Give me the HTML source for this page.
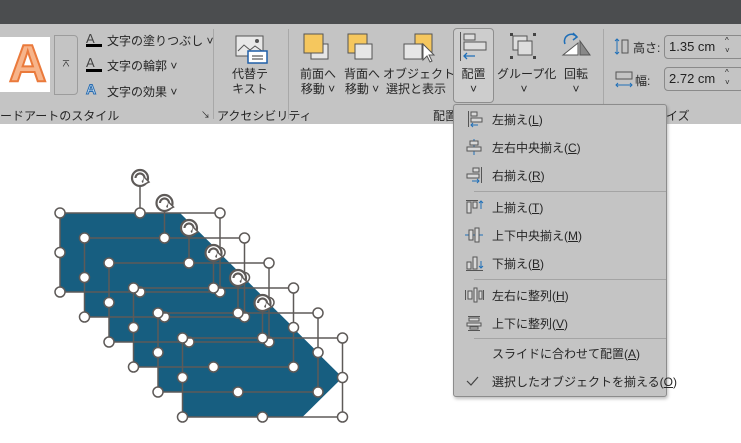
<!DOCTYPE html>
<html><head><meta charset="utf-8"><style>
*{margin:0;padding:0;box-sizing:border-box}
body{width:741px;height:443px;overflow:hidden;background:#fff;font-family:"Liberation Sans","Noto Sans CJK JP",sans-serif;font-size:12px;color:#262626;position:relative}
.a{position:absolute;white-space:nowrap}
.c{text-align:center;line-height:15px}
#top{left:0;top:0;width:741px;height:24px;background:#4b4d4f}
#rib{left:0;top:24px;width:741px;height:100px;background:#c4c4c4}
.sep{position:absolute;width:1px;background:#a8a8a8}
#menu{left:453px;top:104px;width:214px;height:293px;background:#c4c4c4;border:1px solid #8c8c8c;border-radius:3px;box-shadow:1px 2px 3px rgba(0,0,0,.25)}
.mi{position:absolute;left:38px;font-size:12px}
.ms{position:absolute;left:20px;width:192px;height:1px;background:#a4a4a4}
u{text-decoration:underline}
</style></head><body>
<div class="a" id="top"></div>
<div class="a" id="rib"></div>
<div class="a" style="left:0;top:37px;width:50px;height:55px;background:#fff"></div>
<div class="a" style="left:9px;top:34px;font-size:52px;font-weight:bold;color:#f7b48a;-webkit-text-stroke:2px #ea7a3c;line-height:60px">A</div>
<div class="a" style="left:54px;top:35px;width:24px;height:60px;border:1px solid #9c9c9c;border-radius:0 4px 4px 0"></div>
<div class="a" style="left:61px;top:55px;font-size:10px">⌅</div>
<div class="a" style="left:86px;top:31px;font-size:13px;text-decoration:underline;color:#444">A</div>
<div class="a" style="left:86px;top:44px;width:16px;height:3px;background:#000"></div>
<div class="a" style="left:86px;top:55px;font-size:13px;color:#444">A</div>
<div class="a" style="left:86px;top:69px;width:16px;height:3px;background:#000"></div>
<div class="a" style="left:86px;top:81px;font-size:14px;font-weight:bold;color:#cfe3f5;-webkit-text-stroke:1px #2a6db0">A</div>
<div class="a" style="left:107px;top:32px">文字の塗りつぶし ˅</div>
<div class="a" style="left:107px;top:57px">文字の輪郭 ˅</div>
<div class="a" style="left:107px;top:83px">文字の効果 ˅</div>
<div class="a" style="left:0;top:107px">ードアートのスタイル</div>
<div class="a" style="left:201px;top:108px;font-size:9px">↘</div>
<div class="sep" style="left:213px;top:29px;height:90px"></div>
<svg class="a" style="left:235px;top:35px" width="34" height="30"><rect x="1" y="1" width="27" height="20" fill="#e8e8e8" stroke="#555"/><polyline points="3,16 9,10 15,15 20,11 27,16" fill="none" stroke="#555"/><circle cx="22" cy="6" r="2" fill="#555"/><rect x="13" y="16" width="19" height="12" fill="#fff" stroke="#1f5fa8" stroke-width="1.5"/><line x1="17" y1="21" x2="28" y2="21" stroke="#333"/><line x1="17" y1="24" x2="28" y2="24" stroke="#333"/></svg>
<div class="a c" style="left:228px;top:67px;width:44px">代替テ<br>キスト</div>
<div class="a" style="left:217px;top:107px">アクセシビリティ</div>
<div class="sep" style="left:288px;top:29px;height:90px"></div>
<svg class="a" style="left:303px;top:33px" width="30" height="28"><rect x="8" y="11" width="17" height="15" fill="#e6e6e6" stroke="#555"/><rect x="1" y="1" width="19" height="19" fill="#f5c75e" stroke="#555"/></svg>
<div class="a c" style="left:296px;top:67px;width:44px">前面へ<br>移動 ˅</div>
<svg class="a" style="left:347px;top:33px" width="30" height="28"><rect x="1" y="1" width="19" height="19" fill="#f5c75e" stroke="#555"/><rect x="8" y="11" width="17" height="15" fill="#e6e6e6" stroke="#555"/></svg>
<div class="a c" style="left:340px;top:67px;width:44px">背面へ<br>移動 ˅</div>
<svg class="a" style="left:402px;top:33px" width="34" height="30"><rect x="13" y="1" width="17" height="20" fill="#f5c75e" stroke="#555"/><rect x="2" y="11" width="18" height="15" fill="#e6e6e6" stroke="#555"/><path d="M21 11 L21 27 L25 23 L28 29 L30 28 L27 22 L32 22 Z" fill="#fff" stroke="#555"/></svg>
<div class="a c" style="left:383px;top:67px;width:66px">オブジェクトの<br>選択と表示</div>
<div class="a" style="left:433px;top:107px">配置</div>
<div class="a" style="left:453px;top:28px;width:41px;height:75px;background:#cdcdcd;border:1px solid #8e8e8e;border-radius:4px"></div>
<svg class="a" style="left:459px;top:31px" width="30" height="32"><line x1="1.5" y1="1" x2="1.5" y2="30" stroke="#555"/><rect x="5" y="3" width="11" height="6" fill="#ddd" stroke="#555"/><rect x="5" y="11" width="22" height="8" fill="#ddd" stroke="#555"/><path d="M16 25 H5 M8 22 L5 25 L8 28" fill="none" stroke="#1f6fb8" stroke-width="1.3"/></svg>
<div class="a c" style="left:453px;top:67px;width:41px">配置<br>˅</div>
<svg class="a" style="left:508px;top:31px" width="30" height="30"><rect x="5" y="5" width="14" height="14" fill="#ddd" stroke="#555"/><rect x="10" y="10" width="14" height="14" fill="#ddd" stroke="#555"/><rect x="2" y="2" width="3" height="3" fill="#444"/><rect x="25" y="2" width="3" height="3" fill="#444"/><rect x="2" y="25" width="3" height="3" fill="#444"/><rect x="25" y="25" width="3" height="3" fill="#444"/></svg>
<div class="a c" style="left:497px;top:67px;width:54px">グループ化<br>˅</div>
<svg class="a" style="left:561px;top:31px" width="30" height="26"><path d="M4 13 A7 7 0 0 1 16 6" fill="none" stroke="#1f6fb8" stroke-width="1.5"/><path d="M12 2 L16 6 L12 9" fill="none" stroke="#1f6fb8" stroke-width="1.5"/><path d="M2 24 L17 12 L17 24 Z" fill="#fff" stroke="#555"/><path d="M19 10 L29 24 L19 24 Z" fill="#888" stroke="#555"/></svg>
<div class="a c" style="left:557px;top:67px;width:38px">回転<br>˅</div>
<div class="sep" style="left:603px;top:29px;height:90px"></div>
<svg class="a" style="left:614px;top:38px" width="20" height="18"><path d="M3 1 V16 M1 3 L3 1 L5 3 M1 14 L3 16 L5 14" fill="none" stroke="#1f6fb8"/><rect x="8" y="2" width="6" height="13" fill="none" stroke="#555"/></svg>
<div class="a" style="left:633px;top:39px">高さ:</div>
<div class="a" style="left:664px;top:35px;width:80px;height:24px;border:1px solid #8a8a8a;border-radius:4px;padding:3px 4px;font-size:13px;color:#222">1.35 cm</div>
<div class="a" style="left:725px;top:36px;font-size:8px;line-height:10px">^<br>˅</div>
<svg class="a" style="left:614px;top:70px" width="20" height="20"><rect x="2" y="2" width="16" height="7" fill="none" stroke="#555"/><path d="M2 15 H18 M4 13 L2 15 L4 17 M16 13 L18 15 L16 17" fill="none" stroke="#1f6fb8"/></svg>
<div class="a" style="left:635px;top:72px">幅:</div>
<div class="a" style="left:664px;top:67px;width:80px;height:24px;border:1px solid #8a8a8a;border-radius:4px;padding:3px 4px;font-size:13px;color:#222">2.72 cm</div>
<div class="a" style="left:725px;top:68px;font-size:8px;line-height:10px">^<br>˅</div>
<div class="a" style="left:666px;top:107px">イズ</div>

<svg class="a" style="left:0;top:0" width="741" height="443">
<defs>
<path id="sh" d="M0 0 L120 0 L160 39.5 L120 79 L0 79 Z" fill="#175e80"/>
<g id="bx" stroke="#5e5a58" stroke-width="1.5" fill="#fff">
<line x1="80" y1="0" x2="80" y2="-27"/>
<rect x="0" y="0" width="160" height="79" fill="none"/>
<circle cx="0" cy="0" r="5"/><circle cx="80" cy="0" r="5"/><circle cx="160" cy="0" r="5"/>
<circle cx="0" cy="39.5" r="5"/><circle cx="160" cy="39.5" r="5"/>
<circle cx="0" cy="79" r="5"/><circle cx="80" cy="79" r="5"/><circle cx="160" cy="79" r="5"/>
<circle cx="80" cy="-35" r="8" fill="#fff" stroke-width="2.2"/><path d="M75.5 -35 A4.5 4.5 0 1 1 82 -31" fill="none" stroke-width="2.2"/><path d="M84 -36 L89 -31 L83 -28" fill="#fff" stroke-width="1.5"/>
</g>
</defs>
<g transform="translate(60,213)">
<use href="#sh"/><use href="#sh" x="24.5" y="25"/><use href="#sh" x="49" y="50"/><use href="#sh" x="73.5" y="75"/><use href="#sh" x="98" y="100"/><use href="#sh" x="122.5" y="125"/>
<use href="#bx"/><use href="#bx" x="24.5" y="25"/><use href="#bx" x="49" y="50"/><use href="#bx" x="73.5" y="75"/><use href="#bx" x="98" y="100"/><use href="#bx" x="122.5" y="125"/>
</g>
</svg>

<div class="a" id="menu">
<svg style="position:absolute;left:10px;top:0" width="24" height="292" fill="#d8d8d8" stroke="#555">
<g transform="translate(0,6)"><line x1="4.5" y1="0" x2="4.5" y2="16"/><rect x="7" y="1" width="6" height="4"/><rect x="7" y="7" width="11" height="4"/><path d="M14 14 H7 M9 12 L7 14 L9 16" fill="none" stroke="#1f6fb8"/></g>
<g transform="translate(0,34)"><line x1="10" y1="0" x2="10" y2="16" stroke="#1f6fb8"/><rect x="6" y="2" width="8" height="4"/><rect x="3" y="8" width="14" height="4"/></g>
<g transform="translate(0,62)"><line x1="17.5" y1="0" x2="17.5" y2="16"/><rect x="9" y="1" width="6" height="4"/><rect x="3" y="7" width="12" height="4"/><path d="M8 14 H15 M13 12 L15 14 L13 16" fill="none" stroke="#1f6fb8"/></g>
<g transform="translate(0,94)"><line x1="2" y1="1.5" x2="14" y2="1.5"/><rect x="3" y="3" width="4" height="11"/><rect x="9" y="3" width="4" height="6"/><path d="M17 10 V2 M15 4 L17 2 L19 4" fill="none" stroke="#1f6fb8"/></g>
<g transform="translate(0,122)"><line x1="1" y1="8" x2="19" y2="8" stroke="#1f6fb8"/><rect x="5" y="3" width="4" height="10"/><rect x="11" y="1" width="4" height="14"/></g>
<g transform="translate(0,150)"><line x1="2" y1="15.5" x2="19" y2="15.5"/><rect x="3" y="7" width="4" height="7"/><rect x="9" y="2" width="4" height="12"/><path d="M17 6 V13 M15 11 L17 13 L19 11" fill="none" stroke="#1f6fb8"/></g>
<g transform="translate(0,182)"><line x1="1.5" y1="3" x2="1.5" y2="13"/><line x1="19.5" y1="3" x2="19.5" y2="13"/><rect x="4" y="4" width="4" height="8"/><rect x="10" y="1" width="3" height="14"/><rect x="15" y="4" width="3" height="8"/></g>
<g transform="translate(0,210)"><line x1="4" y1="1.5" x2="16" y2="1.5"/><line x1="4" y1="15.5" x2="16" y2="15.5"/><rect x="5" y="3" width="10" height="3"/><rect x="3" y="8" width="14" height="3"/><rect x="6" y="12" width="8" height="2"/></g>
<path d="M3 276 L7 280 L14 272" fill="none" stroke="#444" stroke-width="1.2"/>
</svg>
<div class="mi" style="top:6px">左揃え(<u>L</u>)</div>
<div class="mi" style="top:34px">左右中央揃え(<u>C</u>)</div>
<div class="mi" style="top:62px">右揃え(<u>R</u>)</div>
<div class="ms" style="top:86px"></div>
<div class="mi" style="top:94px">上揃え(<u>T</u>)</div>
<div class="mi" style="top:122px">上下中央揃え(<u>M</u>)</div>
<div class="mi" style="top:150px">下揃え(<u>B</u>)</div>
<div class="ms" style="top:174px"></div>
<div class="mi" style="top:182px">左右に整列(<u>H</u>)</div>
<div class="mi" style="top:210px">上下に整列(<u>V</u>)</div>
<div class="ms" style="top:233px"></div>
<div class="mi" style="top:240px">スライドに合わせて配置(<u>A</u>)</div>
<div class="mi" style="top:268px">選択したオブジェクトを揃える(<u>O</u>)</div>
</div>
</body></html>
